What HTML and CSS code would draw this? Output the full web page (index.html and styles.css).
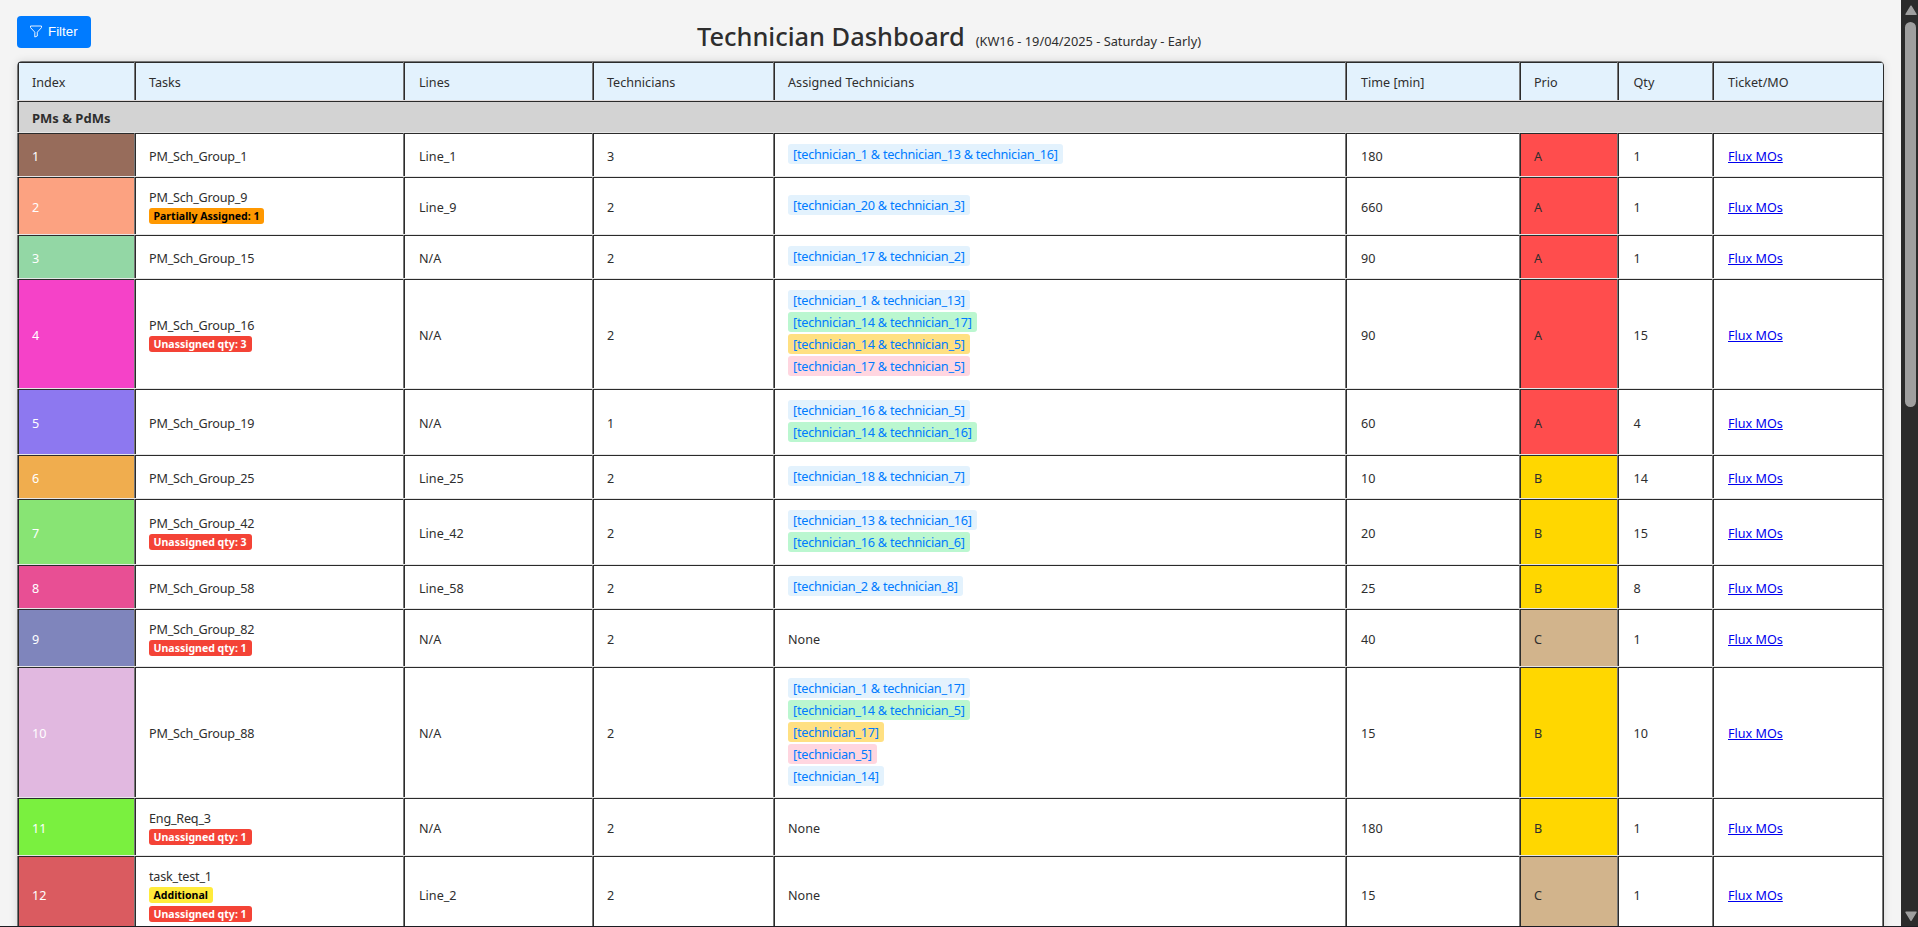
FILE: index.html
```
<!DOCTYPE html>
<html lang="en">
<head>
<meta charset="utf-8">
<title>Technician Dashboard</title>
<link rel="stylesheet" href="styles.css">
</head>
<body>
<div class="page">
<main class="content">
<header class="topbar">
<button class="filter-btn"><svg class="funnel" width="12" height="13" viewBox="0 0 12 13" fill="none" stroke="#fff"><path d="M.5 1h11v1.6L7.3 7.2V11L4.8 12V7.2L.5 2.6z" stroke-width=".9"/></svg>Filter</button>
<div class="heading">
<h1 class="title">Technician Dashboard</h1>
<span class="shift">(KW16 - 19/04/2025 - Saturday - Early)</span>
</div>
</header>
<section class="table">
<div class="row head"><div class="cell">Index</div><div class="cell">Tasks</div><div class="cell line">Lines</div><div class="cell">Technicians</div><div class="cell assigned-head">Assigned Technicians</div><div class="cell time">Time [min]</div><div class="cell">Prio</div><div class="cell qty">Qty</div><div class="cell ticket">Ticket/MO</div></div>
<div class="row group"><div class="cell">PMs &amp; PdMs</div></div>
<div class="row single"><div class="cell index c1">1</div><div class="cell name">PM_Sch_Group_1</div><div class="cell line">Line_1</div><div class="cell">3</div><div class="cell pills"><span class="pill blue">[technician_1 &amp; technician_13 &amp; technician_16]</span></div><div class="cell time">180</div><div class="cell prio-a">A</div><div class="cell qty">1</div><div class="cell ticket"><a href="#">Flux MOs</a></div></div>
<div class="row tagged"><div class="cell index c2">2</div><div class="cell task"><span class="name">PM_Sch_Group_9</span><span class="badge partial">Partially Assigned: 1</span></div><div class="cell line">Line_9</div><div class="cell">2</div><div class="cell pills"><span class="pill blue">[technician_20 &amp; technician_3]</span></div><div class="cell time">660</div><div class="cell prio-a">A</div><div class="cell qty">1</div><div class="cell ticket"><a href="#">Flux MOs</a></div></div>
<div class="row single"><div class="cell index c3">3</div><div class="cell name">PM_Sch_Group_15</div><div class="cell line">N/A</div><div class="cell">2</div><div class="cell pills"><span class="pill blue">[technician_17 &amp; technician_2]</span></div><div class="cell time">90</div><div class="cell prio-a">A</div><div class="cell qty">1</div><div class="cell ticket"><a href="#">Flux MOs</a></div></div>
<div class="row four"><div class="cell index c4">4</div><div class="cell task"><span class="name">PM_Sch_Group_16</span><span class="badge unassigned">Unassigned qty: 3</span></div><div class="cell line">N/A</div><div class="cell">2</div><div class="cell pills"><span class="pill blue">[technician_1 &amp; technician_13]</span><span class="pill green">[technician_14 &amp; technician_17]</span><span class="pill amber">[technician_14 &amp; technician_5]</span><span class="pill pink">[technician_17 &amp; technician_5]</span></div><div class="cell time">90</div><div class="cell prio-a">A</div><div class="cell qty">15</div><div class="cell ticket"><a href="#">Flux MOs</a></div></div>
<div class="row two"><div class="cell index c5">5</div><div class="cell name">PM_Sch_Group_19</div><div class="cell line">N/A</div><div class="cell">1</div><div class="cell pills"><span class="pill blue">[technician_16 &amp; technician_5]</span><span class="pill green">[technician_14 &amp; technician_16]</span></div><div class="cell time">60</div><div class="cell prio-a">A</div><div class="cell qty">4</div><div class="cell ticket"><a href="#">Flux MOs</a></div></div>
<div class="row single"><div class="cell index c6">6</div><div class="cell name">PM_Sch_Group_25</div><div class="cell line">Line_25</div><div class="cell">2</div><div class="cell pills"><span class="pill blue">[technician_18 &amp; technician_7]</span></div><div class="cell time">10</div><div class="cell prio-b">B</div><div class="cell qty">14</div><div class="cell ticket"><a href="#">Flux MOs</a></div></div>
<div class="row two"><div class="cell index c7">7</div><div class="cell task"><span class="name">PM_Sch_Group_42</span><span class="badge unassigned">Unassigned qty: 3</span></div><div class="cell line">Line_42</div><div class="cell">2</div><div class="cell pills"><span class="pill blue">[technician_13 &amp; technician_16]</span><span class="pill green">[technician_16 &amp; technician_6]</span></div><div class="cell time">20</div><div class="cell prio-b">B</div><div class="cell qty">15</div><div class="cell ticket"><a href="#">Flux MOs</a></div></div>
<div class="row single"><div class="cell index c8">8</div><div class="cell name">PM_Sch_Group_58</div><div class="cell line">Line_58</div><div class="cell">2</div><div class="cell pills"><span class="pill blue">[technician_2 &amp; technician_8]</span></div><div class="cell time">25</div><div class="cell prio-b">B</div><div class="cell qty">8</div><div class="cell ticket"><a href="#">Flux MOs</a></div></div>
<div class="row tagged"><div class="cell index c9">9</div><div class="cell task"><span class="name">PM_Sch_Group_82</span><span class="badge unassigned">Unassigned qty: 1</span></div><div class="cell line">N/A</div><div class="cell">2</div><div class="cell">None</div><div class="cell time">40</div><div class="cell prio-c">C</div><div class="cell qty">1</div><div class="cell ticket"><a href="#">Flux MOs</a></div></div>
<div class="row five"><div class="cell index c10">10</div><div class="cell name">PM_Sch_Group_88</div><div class="cell line">N/A</div><div class="cell">2</div><div class="cell pills"><span class="pill blue">[technician_1 &amp; technician_17]</span><span class="pill green">[technician_14 &amp; technician_5]</span><span class="pill amber">[technician_17]</span><span class="pill pink">[technician_5]</span><span class="pill blue">[technician_14]</span></div><div class="cell time">15</div><div class="cell prio-b">B</div><div class="cell qty">10</div><div class="cell ticket"><a href="#">Flux MOs</a></div></div>
<div class="row tagged"><div class="cell index c11">11</div><div class="cell task"><span class="name">Eng_Req_3</span><span class="badge unassigned">Unassigned qty: 1</span></div><div class="cell line">N/A</div><div class="cell">2</div><div class="cell">None</div><div class="cell time">180</div><div class="cell prio-b">B</div><div class="cell qty">1</div><div class="cell ticket"><a href="#">Flux MOs</a></div></div>
<div class="row double-tagged"><div class="cell index c12">12</div><div class="cell task"><span class="name">task_test_1</span><span class="badge additional">Additional</span><span class="badge unassigned">Unassigned qty: 1</span></div><div class="cell line">Line_2</div><div class="cell">2</div><div class="cell">None</div><div class="cell time">15</div><div class="cell prio-c">C</div><div class="cell qty">1</div><div class="cell ticket"><a href="#">Flux MOs</a></div></div>
</section>
</main>
<aside class="scrollbar">
<svg width="12" height="11" viewBox="0 0 12 11"><path d="M6 1.2 11 9.3H1z" fill="#9f9f9f" stroke="#9f9f9f" stroke-width="1.4" stroke-linejoin="round"/></svg>
<div class="thumb"></div>
<svg class="down" width="12" height="11" viewBox="0 0 12 11"><path d="M6 9.3 11 1.2H1z" fill="#9f9f9f" stroke="#9f9f9f" stroke-width="1.4" stroke-linejoin="round"/></svg>
</aside>
</div>
</body>
</html>
```
FILE: styles.css
```
* { box-sizing: border-box; }
body {
  margin: 0;
  height: 927px;
  overflow: hidden;
  background: #f4f4f4;
  color: #2e2e2e;
  font: 12.6px/16px "Noto Sans", "Open Sans", sans-serif;
}
.page { display: flex; height: 927px; border-bottom: 1px solid #1c1c22; }
.content { flex: 1; height: 926px; overflow: hidden; padding-left: 17px; }
.topbar { display: flex; height: 61px; align-items: flex-start; padding-top: 16px; }
.filter-btn {
  display: flex;
  align-items: center;
  width: 74px;
  height: 32px;
  padding: 0 0 0 13px;
  gap: 6px;
  border: 0;
  border-radius: 4px;
  background: #007bff;
  color: #fff;
  font: 13.33px/16px "Liberation Sans", Arial, sans-serif;
  flex: none;
}
.funnel { margin-top: -1px; }
.heading { display: flex; align-items: baseline; margin: 4px 0 0 606px; white-space: nowrap; }
.title {
  margin: 0;
  font-size: 25.4px;
  font-weight: 500;
  line-height: 32px;
}
.shift { margin-left: 11px; font-size: 12.8px; }
.table {
  width: 1867px;
  border-right: 1px solid #2b2b2b;
  border-radius: 5px 5px 0 0;
  box-shadow: 0 0 8px rgba(0, 0, 0, 0.12);
  overflow: hidden;
  background: #fff;
}
.row {
  display: grid;
  grid-template-columns: 117px 269px 189px 181px 572px 174px 98px 95px 171px;
  border-top: 1px solid #e6e6e6;
  border-right: 1px solid #777;
}
.cell {
  display: flex;
  flex-direction: column;
  justify-content: center;
  align-items: flex-start;
  padding: 4.4px 0 0 14px;
  border-left: 1px solid #777;
  box-shadow: inset 1px 1px 0 #2b2b2b;
  white-space: nowrap;
}
.line, .time, .ticket { padding-left: 15px; }
.qty { padding-left: 15.5px; }
.head { height: 39px; border-top-color: #777; }
.head .cell { background: #e3f2fd; padding-top: 4.6px; }
.head .assigned-head { letter-spacing: 0.05px; }
.group { height: 32px; grid-template-columns: 1fr; border-top-color: #e0dcdc; }
.group .cell { background: #d3d3d3; font-weight: 700; font-size: 13px; padding-top: 2.6px; }
.single { height: 44px; }
.tagged { height: 58px; }
.two { height: 66px; }
.four { height: 110px; }
.five { height: 131px; }
.double-tagged { height: 77px; }
.index { color: #fff; }
.name { letter-spacing: -0.2px; }
.task { padding-top: 2px; gap: 3px; }
.task .name { margin: 1px 0 -1px; }
.pills { padding-top: 0; padding-bottom: 1px; gap: 2px; }
.pill {
  height: 20px;
  padding: 0 5px;
  border-radius: 3px;
  color: #007bff;
  font-size: 12.7px;
  letter-spacing: -0.26px;
  line-height: 21px;
}
.blue { background: #e3f2fd; }
.green { background: #bbf7d0; }
.amber { background: #ffe082; }
.pink { background: #ffd6e0; }
.badge {
  height: 16px;
  padding: 0 5px 0 4.5px;
  border-radius: 3px;
  font-size: 10.55px;
  font-weight: 700;
  line-height: 17px;
}
.partial { background: #ff9800; color: #000; }
.unassigned { background: #f44336; color: #fff; }
.additional { background: #ffeb3b; color: #000; }
.prio-a { background: #ff4d4d; }
.prio-b { background: #ffd700; }
.prio-c { background: #d2b48c; }
.c1 { background: #976c5b; }
.c2 { background: #fca281; }
.c3 { background: #93d7a5; }
.c4 { background: #f542c8; }
.c5 { background: #8d78f0; }
.c6 { background: #f0ad4e; }
.c7 { background: #88e474; }
.c8 { background: #e84f94; }
.c9 { background: #7f85bc; }
.c10 { background: #e1b8e0; }
.c11 { background: #7af03f; }
.c12 { background: #da5b60; }
a { color: #0000ee; text-underline-offset: 1px; text-decoration-thickness: 1px; }
.scrollbar {
  display: flex;
  flex-direction: column;
  align-items: center;
  width: 17px;
  height: 926px;
  padding: 5px 0 4px 2px;
  background: #2b2b2b;
}
.thumb { width: 11px; height: 385px; margin-top: 6px; border-radius: 5.5px; background: #9f9f9f; }
.down { margin-top: auto; }
```
